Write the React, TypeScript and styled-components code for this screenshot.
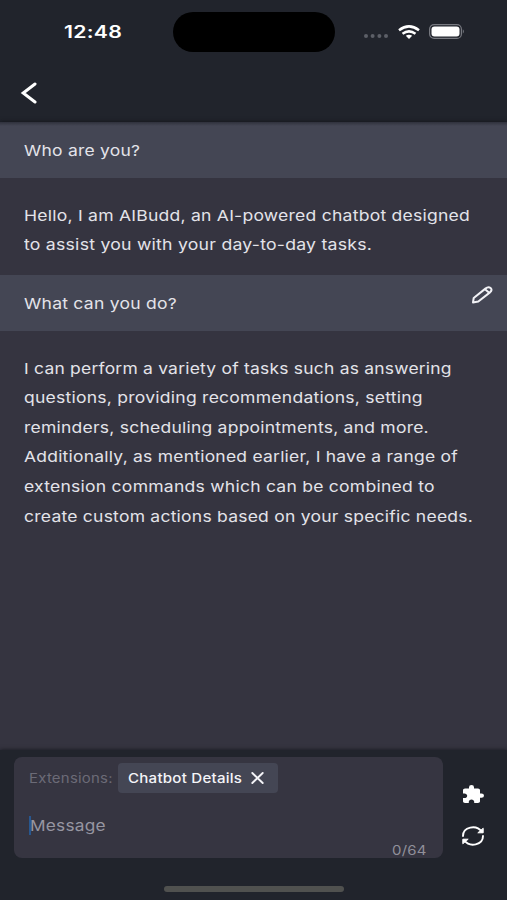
import React from "react";
import styled, { createGlobalStyle } from "styled-components";

const Global = createGlobalStyle`
  * { box-sizing: border-box; }
  body { margin: 0; background: #21242c; font-family: Inter, "Noto Sans", sans-serif; }
`;

const Screen = styled.main`
  width: 507px;
  height: 900px;
  display: flex;
  flex-direction: column;
  overflow: hidden;
  background: #21242c;
  color: #e3e3e9;
`;

const StatusBar = styled.header`
  height: 64px;
  display: grid;
  grid-template-columns: 173px 162px 1fr;
  align-items: center;
  flex: none;
`;

const Island = styled.div`
  height: 40px;
  border-radius: 20px;
  background: #000;
`;

const Clock = styled.div`
  padding-left: 64px;
  color: #fff;
`;

const StatusIcons = styled.div`
  display: flex;
  align-items: flex-end;
  padding: 0 0 1px 28px;
`;

const Line = styled.span<{ $size?: number; $stretch?: number; $weight?: number; $gap?: number }>`
  display: block;
  width: max-content;
  white-space: nowrap;
  font-size: ${(p) => p.$size ?? 15}px;
  font-weight: ${(p) => p.$weight ?? 400};
  letter-spacing: ${(p) => p.$gap ?? 0.2}px;
  transform: scaleX(${(p) => p.$stretch ?? 1.15});
  transform-origin: left center;
`;

const NavBar = styled.nav`
  height: 58px;
  flex: none;
  display: flex;
  align-items: center;
  padding: 0 0 0 20px;
`;

const IconButton = styled.button`
  display: flex;
  padding: 0;
  border: 0;
  background: none;
  color: #fff;
`;

const Chat = styled.section`
  flex: 1;
  background: #353440;
  box-shadow: 0 0 4px rgba(12, 14, 20, 0.8);
`;

const Question = styled.article`
  height: 56px;
  display: flex;
  align-items: center;
  justify-content: space-between;
  padding: 1px 14px 0 24px;
  background: #444654;

  &:first-child {
    background: linear-gradient(#2f313c, #444654 4px);
  }
`;

const EditButton = styled(IconButton)`
  margin-bottom: 17px;
`;

const Answer = styled.article`
  padding: 22.5px 24px 15.500px;
  line-height: 29.6px;
`;

const Footer = styled.footer`
  height: 150px;
  flex: none;
  display: grid;
  grid-template-columns: 429px 1fr;
  grid-template-rows: 101px 1fr;
  padding: 7px 0 0 14px;
  background: #21242c;
  box-shadow: 0 0 4px rgba(12, 14, 20, 0.8);
  z-index: 1;
`;

const Composer = styled.div`
  display: flex;
  flex-direction: column;
  border-radius: 8px;
  background: #363541;
  padding: 6px 15px 0;
`;

const Extensions = styled.div`
  display: flex;
  align-items: center;
  height: 30px;
  color: #6c6b77;
`;

const ExtensionLabel = styled.div`
  width: 89px;
`;

const Chip = styled.div`
  width: 160px;
  height: 30px;
  border-radius: 4px;
  display: flex;
  align-items: center;
  justify-content: space-between;
  padding: 0 14px 0 10px;
  background: #444654;
  color: #f4f4f8;
`;

const Message = styled.div`
  height: 20px;
  margin-top: 22px;
  display: flex;
  align-items: center;
  color: #9796a1;
`;

const Caret = styled.i`
  width: 2px;
  height: 19px;
  margin-right: -1px;
  background: #28578f;
`;

const Counter = styled.div`
  width: 36px;
  margin: 7px 0 0 auto;
  color: #91909a;
`;

const Actions = styled.div`
  display: flex;
  flex-direction: column;
  align-items: center;
  gap: 23px;
  padding: 28px 4px 0 0;
`;

const HomeArea = styled.div`
  grid-column: 1 / -1;
  padding: 28px 0 0 150px;
`;

const HomeBar = styled.div`
  width: 180px;
  height: 6px;
  border-radius: 3px;
  background: #50514f;
`;

const firstAnswer = [
  { text: "Hello, I am AIBudd, an AI-powered chatbot designed", stretch: 1.17 },
  { text: "to assist you with your day-to-day tasks.", stretch: 1.177 },
];

const secondAnswer = [
  { text: "I can perform a variety of tasks such as answering", stretch: 1.162 },
  { text: "questions, providing recommendations, setting", stretch: 1.17 },
  { text: "reminders, scheduling appointments, and more.", stretch: 1.167 },
  { text: "Additionally, as mentioned earlier, I have a range of", stretch: 1.165 },
  { text: "extension commands which can be combined to", stretch: 1.17 },
  { text: "create custom actions based on your specific needs.", stretch: 1.167 },
];

const WifiSvg = styled.svg`
  margin: 0 9px;
`;

const SignalDots = () => (
  <svg width="26" height="6" viewBox="0 0 26 6" fill="#5c5f67">
    <circle cx="3" cy="3" r="2" />
    <circle cx="9.6" cy="3" r="2" />
    <circle cx="16.4" cy="3" r="2" />
    <circle cx="23" cy="3" r="2" />
  </svg>
);

const Wifi = () => (
  <WifiSvg width="22" height="14" viewBox="0 0 22 14" fill="none" stroke="#fff" strokeWidth="2.5">
    <path d="M1 5.2Q11-2.4 21 5.2" />
    <path d="M4.5 8.7Q11 4 17.5 8.7" />
    <path d="M7.8 10.8Q11 8.8 14.2 10.8L11 13.9Z" fill="#fff" stroke="none" />
  </WifiSvg>
);

const Battery = () => (
  <svg width="36" height="15" viewBox="0 0 36 15">
    <rect x=".6" y=".6" width="31.8" height="13.8" rx="4.5" fill="none" stroke="#777980" strokeWidth="1.2" />
    <rect x="2.5" y="2.5" width="28" height="10" rx="3" fill="#fff" />
    <path d="M33.8 5.3Q36 7.5 33.8 9.7Z" fill="#777980" />
  </svg>
);

const Back = () => (
  <svg width="18" height="22" viewBox="0 0 18 22" fill="none" stroke="#fff" strokeWidth="3" strokeLinecap="round">
    <path d="M15 2L3.2 11L15 20" />
  </svg>
);

const Pencil = () => (
  <svg width="22" height="18" viewBox="0 0 22 18" fill="none" stroke="#f2f2f6" strokeWidth="2" strokeLinejoin="round">
    <path d="M2 16.4L2.7 12L14.4 2.6Q17.3.3 19.6 2Q21.7 3.8 19 6.4L7.3 15.5Z" />
    <path d="M14 3.2L18.2 6.8" />
  </svg>
);

const Close = () => (
  <svg width="13" height="12" viewBox="0 0 13 12" stroke="#f4f4f8" strokeWidth="1.9" strokeLinecap="round">
    <path d="M1.3 1L11.7 11M11.7 1L1.3 11" />
  </svg>
);

const Puzzle = () => (
  <svg width="22" height="18" viewBox="1 1 22 21" preserveAspectRatio="none" fill="#fff">
    <path d="M20.5 11H19V7c0-1.1-.9-2-2-2h-4V3.5a2.5 2.5 0 0 0-5 0V5H4c-1.1 0-1.99.9-1.99 2v3.8H3.5c1.49 0 2.7 1.21 2.7 2.7s-1.21 2.7-2.7 2.7H2V20c0 1.1.9 2 2 2h3.8v-1.5c0-1.49 1.21-2.7 2.7-2.7s2.7 1.21 2.7 2.7V22H17c1.1 0 2-.9 2-2v-4h1.5a2.5 2.5 0 0 0 0-5z" />
  </svg>
);

const Refresh = () => (
  <svg width="24" height="20" viewBox="0 0 24 20" fill="none" stroke="#fff" strokeWidth="1.9" strokeLinecap="round" strokeLinejoin="round">
    <path d="M2 10C2 1.2 15-2 20.8 5.8M22 10C22 18.8 9 22 3.200 14.200" />
    <path d="M22.2 2.600V6.800H17.200ZM1.800 17.400V13.200H6.800Z" fill="#fff" strokeWidth="1" />
  </svg>
);

export default function App() {
  return (
    <>
      <Global />
      <Screen>
        <StatusBar>
          <Clock><Line $size={17} $weight={600} $stretch={1.25}>12:48</Line></Clock>
          <Island />
          <StatusIcons>
            <SignalDots />
            <Wifi />
            <Battery />
          </StatusIcons>
        </StatusBar>
        <NavBar>
          <IconButton aria-label="Back"><Back /></IconButton>
        </NavBar>
        <Chat>
          <Question><Line $stretch={1.165}>Who are you?</Line></Question>
          <Answer>
            {firstAnswer.map((l) => <Line key={l.text} $stretch={l.stretch}>{l.text}</Line>)}
          </Answer>
          <Question>
            <Line $stretch={1.17}>What can you do?</Line>
            <EditButton aria-label="Edit"><Pencil /></EditButton>
          </Question>
          <Answer>
            {secondAnswer.map((l) => <Line key={l.text} $stretch={l.stretch}>{l.text}</Line>)}
          </Answer>
        </Chat>
        <Footer>
          <Composer>
            <Extensions>
              <ExtensionLabel><Line $size={13}>Extensions:</Line></ExtensionLabel>
              <Chip>
                <Line $size={13} $weight={500} $stretch={1.16}>Chatbot Details</Line>
                <Close />
              </Chip>
            </Extensions>
            <Message><Caret /><Line>Message</Line></Message>
            <Counter><Line $size={13}>0/64</Line></Counter>
          </Composer>
          <Actions>
            <IconButton aria-label="Extensions"><Puzzle /></IconButton>
            <IconButton aria-label="Refresh"><Refresh /></IconButton>
          </Actions>
          <HomeArea><HomeBar /></HomeArea>
        </Footer>
      </Screen>
    </>
  );
}
